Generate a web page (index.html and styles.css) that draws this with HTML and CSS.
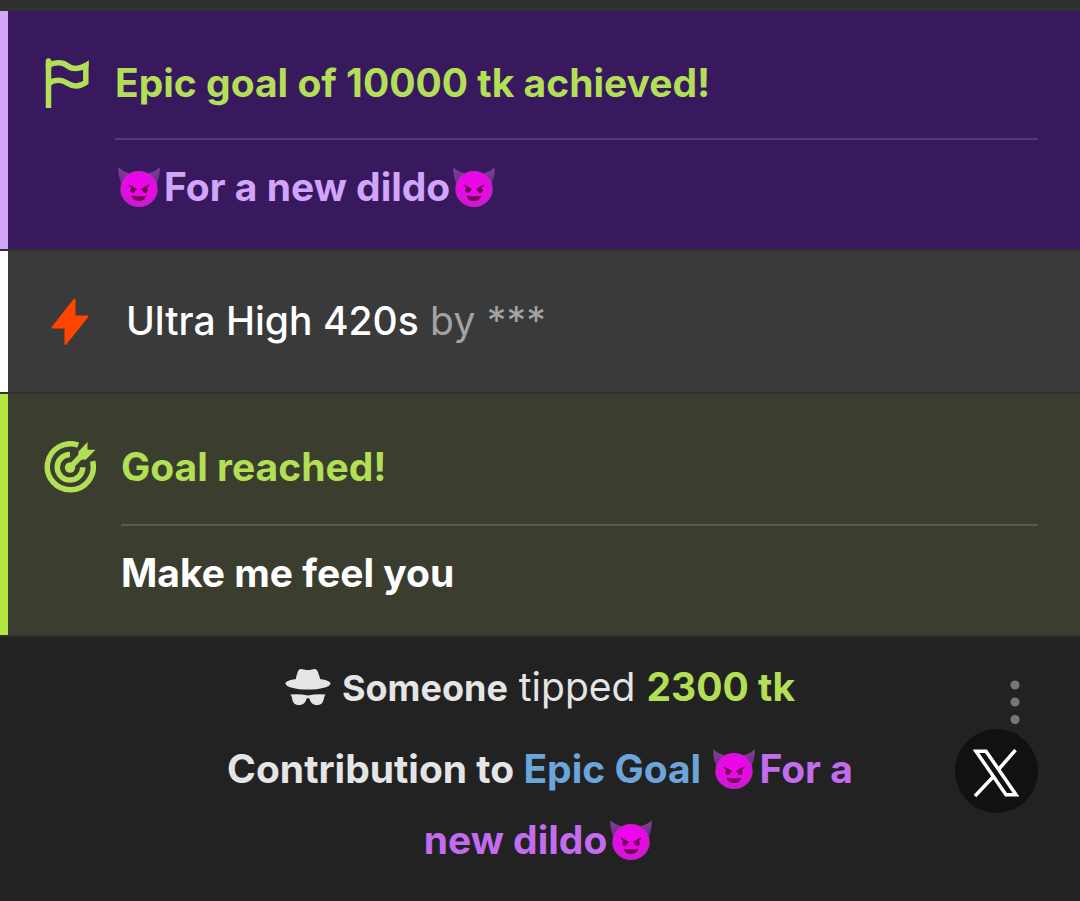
FILE: index.html
```html
<!DOCTYPE html>
<html lang="en">
<head>
    <meta charset="UTF-8">
    <meta name="viewport" content="width=device-width, initial-scale=1.0">
    <title>Goal notifications</title>
    <link rel="stylesheet" href="styles.css">
</head>
<body>
    <svg class="defs" width="0" height="0">
        <defs>
            <linearGradient id="horn" x1="0" y1="0" x2="0" y2="1">
                <stop offset="0" stop-color="#83419a"/>
                <stop offset="1" stop-color="#6b2a86"/>
            </linearGradient>
            <radialGradient id="face" cx="50%" cy="45%" r="55%">
                <stop offset="0.55" stop-color="#ed06ea"/>
                <stop offset="1" stop-color="#c51fc9"/>
            </radialGradient>
            <symbol id="devil" viewBox="0 0 42 40">
                <path d="M0.4 0.3C3 3.6 7 4.8 12 6.5L3.5 17C1 11.5 0 6 0.4 0.3Z" fill="url(#horn)"/>
                <path d="M41.6 0.3C39 3.6 35 4.8 30 6.5L38.5 17C41 11.5 42 6 41.6 0.3Z" fill="url(#horn)"/>
                <ellipse cx="21" cy="22" rx="18.7" ry="18" fill="url(#face)"/>
                <path d="M11.3 18.5L18 22.4M30.7 18.5L24 22.4" stroke="#68004e" stroke-width="1.7" stroke-linecap="round"/>
                <ellipse cx="14.8" cy="23.3" rx="2.4" ry="2.7" fill="#68004e"/>
                <ellipse cx="27.2" cy="23.3" rx="2.4" ry="2.7" fill="#68004e"/>
                <path d="M13.8 28.8Q21 30.4 28.2 28.8C27.6 32 25 34 21 34S14.4 32 13.8 28.8Z" fill="#68004e"/>
            </symbol>
        </defs>
    </svg>

    <div class="chat">
        <div class="notice epic">
            <svg class="icon flag" viewBox="0 0 44 52">
                <path d="M3.5 3V10" stroke-linecap="round"/>
                <path d="M3.5 5.5V50"/>
                <path d="M4 7C9 4.5 17 3.5 22 7.5C27 11.5 33 11.5 40.8 7.5V24.5C35 28.5 28 29 22 25C16 21 10 21.5 4 25"/>
                <path class="tip" d="M37 6.5Q41.5 5.5 43.6 2V9H37Z"/>
            </svg>
            <div class="content">
                <div class="title">Epic goal of 10000 tk achieved!</div>
                <div class="goal-name"><svg class="emoji"><use href="#devil"/></svg>For a new dildo<svg class="emoji"><use href="#devil"/></svg></div>
            </div>
        </div>

        <div class="notice toy">
            <svg class="icon bolt" viewBox="0 0 40 48">
                <path d="M24.5 1.5V18.5H37.5L15.5 46V29.5H2.5Z"/>
            </svg>
            <div class="content">Ultra High 420s <span class="by">by ***</span></div>
        </div>

        <div class="notice reached">
            <svg class="icon target" viewBox="0 0 52 52">
                <path class="ring" d="M34.2 4.2A23 23 0 1 0 48.6 20.2"/>
                <path class="ring" d="M26 13.5A12.8 12.8 0 1 0 38.8 26.3"/>
                <circle cx="26" cy="26.5" r="5.2"/>
                <path class="shaft" d="M26 26.5L39 13"/>
                <path d="M34.5 10.5L43.5 1V8.8H51.5L42 18.5L34 19Z"/>
            </svg>
            <div class="content">
                <div class="title">Goal reached!</div>
                <div class="goal-name">Make me feel you</div>
            </div>
        </div>

        <div class="tip-message">
            <div class="tip-line">
                <svg class="incognito" viewBox="0 0 46 38">
                    <path d="M14 1.5C16 0 19 2 23 2S29.5 0 31.5 1.5C33.3 4 34.2 8 35.2 11C41.5 12 45.5 13.5 45.5 15.5C45.5 19 35.5 21.6 23 21.6S0.5 19 0.5 15.5C0.5 13.5 4.5 12 10.8 11C11.5 8 12.3 4 14 1.5Z"/>
                    <path d="M5.5 26.5Q14 25.5 23 27.5Q32 25.5 40.5 26.5L39 29.5C38.5 34.5 36.5 37 32 37C27.5 37 25.5 34.5 24.3 30.2H21.7C20.5 34.5 18.5 37 14 37C9.5 37 7.5 34.5 7 29.5Z"/>
                </svg>
                <span class="user">Someone</span>
                <span class="tipped">tipped</span>
                <span class="amount">2300 tk</span>
            </div>
            <div class="contribution">Contribution to <span class="link">Epic Goal</span> <span class="name"><svg class="emoji"><use href="#devil"/></svg>For a new dildo<svg class="emoji"><use href="#devil"/></svg></span></div>

            <svg class="menu-dots" viewBox="0 0 10 44">
                <circle cx="5" cy="5" r="4.6"/>
                <circle cx="5" cy="22" r="4.6"/>
                <circle cx="5" cy="39.5" r="4.6"/>
            </svg>
            <div class="x-badge">
                <svg viewBox="0 0 46 48">
                    <path d="M3 2.2H13L43 45.8H33Z"/>
                    <path d="M42.5 1L25.5 20.5M20.5 27.5L2 47"/>
                </svg>
            </div>
        </div>
    </div>
</body>
</html>
```

FILE: styles.css
```css
* {
    box-sizing: border-box;
}
body {
    margin: 0;
    background: #222;
    font-family: Inter, sans-serif;
    font-size: 39px;
    line-height: 48px;
    color: #fff;
    overflow: hidden;
}
.defs {
    position: absolute;
}
.chat {
    display: flex;
    flex-direction: column;
    gap: 2px;
    height: 901px;
    padding-top: 11px;
    background: #30302e;
}
.notice {
    display: flex;
    align-items: flex-start;
    border-left: 8px solid;
    padding-right: 42px;
}
.content {
    flex: 1;
}
.icon {
    flex: none;
}
.title,
.goal-name {
    font-weight: 700;
    white-space: nowrap;
}
.title {
    color: #b2df55;
    padding-top: 1px;
    padding-bottom: 31px;
    border-bottom: 2px solid;
}
.goal-name {
    padding-top: 23px;
}
.emoji {
    width: 42px;
    height: 40px;
    margin: 0 4px 0 3px;
    vertical-align: -6px;
}

/* epic goal */
.epic {
    height: 238px;
    padding-top: 47px;
    padding-left: 36px;
    background: #38195e;
    border-left-color: #d0a5fb;
}
.epic .title {
    border-bottom-color: #553a76;
}
.epic .goal-name {
    color: #d0a5fb;
}
.flag {
    width: 44px;
    height: 52px;
    margin: 0 26px 0 1px;
    fill: none;
    stroke: #b2df55;
    stroke-width: 5.5;
}
.flag .tip {
    fill: #b2df55;
    stroke: none;
}

/* toy activity */
.toy {
    height: 141px;
    align-items: center;
    padding-left: 42px;
    background: #3a3a3a;
    border-left-color: #fff;
    font-weight: 500;
}
.toy .content {
    padding-bottom: 2px;
}
.toy .by {
    margin-left: 1px;
    color: #a3a3a3;
    font-weight: 400;
    letter-spacing: 0.2px;
}
.bolt {
    width: 40px;
    height: 48px;
    margin-right: 36px;
    fill: #ff4500;
    stroke: #ff4500;
    stroke-width: 2;
    stroke-linejoin: round;
}

/* goal reached */
.reached {
    height: 241px;
    padding-top: 47px;
    padding-left: 36px;
    background: #3b3e2f;
    border-left-color: #b3e643;
}
.reached .title {
    padding-top: 2px;
    padding-bottom: 33px;
    border-bottom-color: #575a4d;
}
.target {
    width: 52px;
    height: 52px;
    margin-right: 25px;
    fill: #b2df55;
}
.target .ring,
.target .shaft {
    fill: none;
    stroke: #b2df55;
    stroke-width: 5.5;
}

/* tip message */
.tip-message {
    position: relative;
    flex: 1;
    padding-top: 26px;
    background: #222;
    color: #e5e5e5;
    text-align: center;
}
.tip-line {
    display: flex;
    justify-content: center;
    align-items: baseline;
    gap: 11px;
    height: 48px;
}
.incognito {
    width: 46px;
    height: 38px;
    fill: #e5e5e5;
    align-self: center;
}
.user {
    font-size: 36px;
    font-weight: 700;
}
.tipped {
    font-weight: 400;
}
.amount {
    color: #b2df55;
    font-weight: 700;
}
.contribution {
    width: 640px;
    margin: 22px auto 0;
    font-weight: 700;
    line-height: 71px;
}
.contribution .link {
    color: #6ba5dc;
}
.contribution .name {
    color: #c46cf0;
}
.menu-dots {
    position: absolute;
    top: 43px;
    right: 60px;
    width: 10px;
    height: 44px;
    fill: #777;
}
.x-badge {
    position: absolute;
    top: 92px;
    right: 42px;
    display: flex;
    justify-content: center;
    align-items: center;
    width: 83px;
    height: 84px;
    padding: 3px 2px 0 0;
    border-radius: 50%;
    background: #111;
}
.x-badge svg {
    width: 46px;
    height: 48px;
    fill: none;
    stroke: #fff;
    stroke-width: 3.5;
}
```
